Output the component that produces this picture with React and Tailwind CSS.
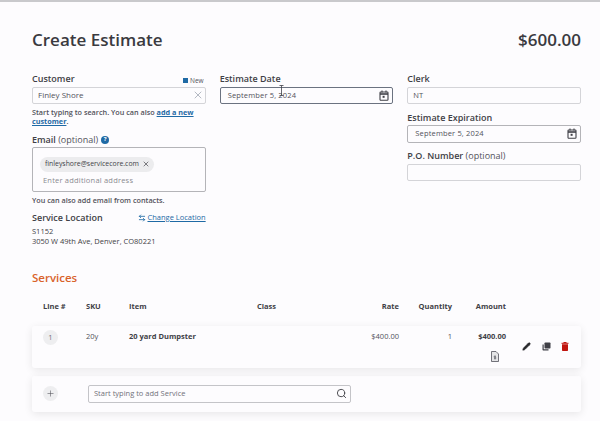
import { X, Search, Plus, Pencil, ArrowLeftRight } from 'lucide-react';

const Label = ({ children, optional }) => (
  <div className="text-[9px] leading-[14px] font-semibold text-[#3f3f46]">
    {children}
    {optional && <span className="font-normal text-[#52525b]"> (optional)</span>}
  </div>
);

const CalendarIcon = () => (
  <svg width="10" height="11" viewBox="0 0 10 11" fill="none" stroke="#3f3f46" strokeWidth="1.1">
    <rect x="1" y="2" width="8" height="8.3" rx="0.8" />
    <path d="M1 4H9" strokeWidth="1.6" />
    <path d="M3 0.6V2.4M7 0.6V2.4" />
    <rect x="3.6" y="5.8" width="2" height="2" fill="#3f3f46" stroke="none" />
  </svg>
);

const Field = ({ value, date, focused }) => (
  <div
    className={[
      'mt-[0.5px] h-[17.5px] rounded-[2px] flex items-center justify-between text-[#52525b] text-[7.5px]',
      date ? 'pl-[7px] pr-[3px] tracking-[0.15px]' : 'pl-[5px] pr-[3px]',
      focused ? 'border border-[#6b7280]' : date ? 'border border-[#b4b4b8]' : 'border border-[#d4d4d8]',
    ].join(' ')}
  >
    <span>{value}</span>
    {date && <CalendarIcon />}
  </div>
);

const COLS = 'grid grid-cols-[43px_43px_128px_142px_53px_54px_1fr] text-[7.5px] leading-[11px]';

export default function App() {
  return (
    <div className="w-[600px] h-[421px] overflow-hidden bg-[#fdfcfe] border-t-2 border-[#c9c9cc] pl-8 pr-[19px] font-['Open_Sans','Noto_Sans',sans-serif] text-[#3f3f46]">
      <div className="mt-[24px] flex items-center justify-between h-[28px]">
        <h1 className="text-[17px] font-semibold text-[#3a3a3f]">Create Estimate</h1>
        <div className="text-[17px] font-semibold text-[#3a3a3f]">$600.00</div>
      </div>

      <div className="mt-[18px] grid grid-cols-3 gap-x-[14px]">
        <div>
          <div className="flex items-end justify-between">
            <Label>Customer</Label>
            <div className="flex items-center gap-[2px] text-[6.5px] leading-[10px] text-[#52525b] mr-[2px] mb-[0.5px]">
              <span className="w-[5px] h-[5px] bg-[#1f6aa5]" />
              New
            </div>
          </div>
          <div className="mt-[0.5px] h-[17.5px] rounded-[2px] border border-[#d4d4d8] pl-[5px] pr-[1px] flex items-center justify-between text-[8px] text-[#52525b]">
            <span>Finley Shore</span>
            <X size={12} strokeWidth={1.5} className="text-[#9ca3af]" />
          </div>
          <div className="mt-[3.5px] text-[7.25px] leading-[9.5px] font-semibold text-[#52525b]">
            <div>
              Start typing to search. You can also{' '}
              <span className="text-[#1f6aa5] underline font-bold">add a new</span>
            </div>
            <div>
              <span className="text-[#1f6aa5] underline font-bold">customer</span>.
            </div>
          </div>

          <div className="mt-[6px] flex items-center gap-[3px]">
            <Label optional>Email</Label>
            <span className="w-[8px] h-[8px] rounded-full bg-[#1f6aa5] text-white text-[6px] font-bold flex items-center justify-center">?</span>
          </div>
          <div className="h-[45px] rounded-[2px] border border-[#b4b4b8] pt-[9px] pl-[7px]">
            <div className="flex w-fit items-center h-[15px] rounded-full bg-[#ececee] pl-[5px] pr-[4px] gap-[3px] text-[6.9px] text-[#3f3f46]">
              finleyshore@servicecore.com
              <X size={8} strokeWidth={2} />
            </div>
            <div className="ml-[3px] mt-[2px] text-[7.5px] leading-[12px] text-[#8a8a90] tracking-[0.2px]">Enter additional address</div>
          </div>
          <p className="mt-[3px] text-[7.25px] leading-[10px] font-semibold text-[#52525b]">You can also add email from contacts.</p>

          <div className="mt-[6px] flex items-center justify-between">
            <Label>Service Location</Label>
            <div className="flex items-center gap-[1px] text-[7.5px] text-[#1f6aa5] underline">
              <ArrowLeftRight size={8} strokeWidth={2.5} />
              Change Location
            </div>
          </div>
          <div className="mt-[1px] text-[7.5px] leading-[10px] text-[#3f3f46]">
            <div>S1152</div>
            <div>3050 W 49th Ave, Denver, CO80221</div>
          </div>
        </div>

        <div className="relative">
          <Label>Estimate Date</Label>
          <Field value="September 5, 2024" date focused />
          {/* mouse cursor caught over the date field */}
          <svg width="5" height="11" viewBox="0 0 5 11" className="absolute left-[59px] top-[13px]" fill="none" stroke="#3f3f46" strokeWidth="0.8">
            <path d="M0.5 0.5H4.5M2.5 0.5V10.5M0.5 10.5H4.5" />
          </svg>
        </div>

        <div>
          <Label>Clerk</Label>
          <Field value="NT" />
          <div className="mt-[6.5px]">
            <Label>Estimate Expiration</Label>
          </div>
          <Field value="September 5, 2024" date />
          <div className="mt-[6.5px]">
            <Label optional>P.O. Number</Label>
          </div>
          <Field value="" />
        </div>
      </div>

      <h2 className="mt-[24px] text-[11.5px] leading-[16px] font-semibold text-[#d9622b]">Services</h2>

      <div className={`${COLS} mt-[15.5px] pl-[11px] font-bold text-[#3f3f46]`}>
        <div>Line #</div>
        <div>SKU</div>
        <div>Item</div>
        <div className="flex justify-between">
          <span>Class</span>
          <span>Rate</span>
        </div>
        <div className="text-right">Quantity</div>
        <div className="text-right">Amount</div>
        <div />
      </div>

      <div className="mt-[13.5px] h-[42px] rounded-[3px] shadow-[0_2px_8px_rgba(0,0,0,0.09)] pl-[11px]">
        <div className={`${COLS} items-start text-[#52525b]`}>
          <div className="mt-[4px] w-[15px] h-[15px] rounded-full bg-[#eeeef0] flex items-center justify-center text-[#71717a]">1</div>
          <div className="mt-[5.5px]">20y</div>
          <div className="mt-[5.5px] font-bold text-[#3f3f46]">20 yard Dumpster</div>
          <div className="mt-[5.5px] text-right">$400.00</div>
          <div className="mt-[5.5px] text-right">1</div>
          <div className="mt-[5.5px] font-bold text-[#3f3f46] flex flex-col items-end">
            <span>$400.00</span>
            <svg width="8" height="11" viewBox="0 0 8 11" className="mt-[8.5px] mr-[7px]" fill="none" stroke="#52525b" strokeWidth="0.8">
              <path d="M0.5 0.5H5L7.5 3V10.5H0.5Z" fill="#e5e5e7" />
              <path d="M4 4.5V8.5M5 5.3H3.4C2.8 5.3 2.8 6.4 3.4 6.4H4.6C5.2 6.4 5.2 7.6 4.6 7.6H3" strokeWidth="0.6" />
            </svg>
          </div>
          <div className="mt-[16px] flex items-center gap-[10.5px] pl-[16px]">
            <Pencil size={9} fill="#27272a" strokeWidth={1.5} className="text-[#27272a]" />
            <svg width="9" height="9" viewBox="0 0 9 9" fill="#3f3f46">
              <rect x="2.5" y="0.5" width="6" height="6" rx="0.8" />
              <path d="M0.5 2.5H1.7V7.3H6.5V8.5H1.3C0.8 8.5 0.5 8.2 0.5 7.7Z" />
            </svg>
            <svg width="8" height="9" viewBox="0 0 8 9" fill="#c0150f">
              <rect x="0.5" y="0.8" width="7" height="1" />
              <rect x="2.5" y="0" width="3" height="1" />
              <path d="M1 2.2H7V8.2C7 8.6 6.7 9 6.3 9H1.7C1.3 9 1 8.6 1 8.2Z" />
            </svg>
          </div>
        </div>
      </div>

      <div className="mt-[8px] h-[36px] rounded-[3px] shadow-[0_2px_8px_rgba(0,0,0,0.09)] pl-[11px] flex items-center">
        <div className="w-[15px] h-[15px] rounded-full bg-[#eeeef0] flex items-center justify-center text-[#52525b]">
          <Plus size={9} strokeWidth={1.5} />
        </div>
        <div className="ml-[30px] w-[263px] h-[18px] rounded-[2px] border border-[#c4c4c8] pl-[5px] pr-[3px] flex items-center justify-between text-[7.5px] text-[#71717a]">
          <span>Start typing to add Service</span>
          <Search size={11} strokeWidth={2} className="text-[#3f3f46]" />
        </div>
      </div>
    </div>
  );
}
